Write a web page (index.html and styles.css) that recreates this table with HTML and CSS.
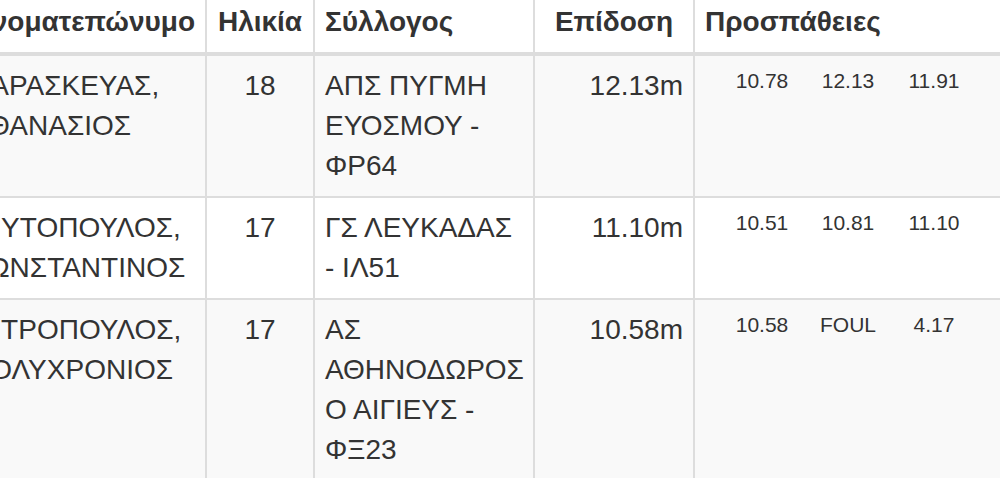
FILE: index.html
```html
<!DOCTYPE html>
<html lang="el">
<head>
<meta charset="utf-8">
<title>Αποτελέσματα</title>
<link rel="stylesheet" href="styles.css">
</head>
<body>
<table class="results">
  <colgroup>
    <col class="w-name">
    <col class="w-age">
    <col class="w-club">
    <col class="w-mark">
    <col class="w-att">
  </colgroup>
  <thead>
    <tr>
      <th class="t-left">Ονοματεπώνυμο</th>
      <th class="t-center">Ηλικία</th>
      <th class="t-left">Σύλλογος</th>
      <th class="t-center">Επίδοση</th>
      <th class="t-left">Προσπάθειες</th>
    </tr>
  </thead>
  <tbody>
    <tr>
      <td>ΠΑΡΑΣΚΕΥΑΣ, ΑΘΑΝΑΣΙΟΣ</td>
      <td class="t-center">18</td>
      <td>ΑΠΣ ΠΥΓΜΗ ΕΥΟΣΜΟΥ - ΦΡ64</td>
      <td class="t-right">12.13m</td>
      <td><div class="attempts"><span>10.78</span><span>12.13</span><span>11.91</span></div></td>
    </tr>
    <tr>
      <td>ΜΙΥΤΟΠΟΥΛΟΣ, ΚΩΝΣΤΑΝΤΙΝΟΣ</td>
      <td class="t-center">17</td>
      <td>ΓΣ ΛΕΥΚΑΔΑΣ - ΙΛ51</td>
      <td class="t-right">11.10m</td>
      <td><div class="attempts"><span>10.51</span><span>10.81</span><span>11.10</span></div></td>
    </tr>
    <tr>
      <td>ΜΙΤΡΟΠΟΥΛΟΣ, ΠΟΛΥΧΡΟΝΙΟΣ</td>
      <td class="t-center">17</td>
      <td>ΑΣ ΑΘΗΝΟΔΩΡΟΣ Ο ΑΙΓΙΕΥΣ - ΦΞ23</td>
      <td class="t-right">10.58m</td>
      <td><div class="attempts"><span>10.58</span><span>FOUL</span><span>4.17</span></div></td>
    </tr>
  </tbody>
</table>
</body>
</html>
```

FILE: styles.css
```css
html, body {
  margin: 0;
  padding: 0;
  overflow: hidden;
  background: #ffffff;
}

body {
  font-family: "Liberation Sans", Arial, "Helvetica Neue", sans-serif;
  font-size: 28px;
  line-height: 40px;
  color: #333333;
}

.results {
  border-collapse: separate;
  border-spacing: 0;
  table-layout: fixed;
  width: 1135px;
  margin: -10px 0 0 -42px;
}

.w-name { width: 247px; }
.w-age { width: 108px; }
.w-club { width: 220px; }
.w-mark { width: 160px; }
.w-att { width: 400px; }

.results th,
.results td {
  box-sizing: border-box;
  padding: 10px;
  border-left: 2px solid #dddddd;
  border-top: 2px solid #dddddd;
  vertical-align: top;
}

.results th {
  font-weight: bold;
  vertical-align: bottom;
  border-bottom: 4px solid #dddddd;
  background: #ffffff;
}

.results tbody tr:first-child td {
  border-top: 0;
}

.results tbody tr:nth-child(odd) td {
  background: #f9f9f9;
}

.results tbody tr:nth-child(even) td {
  background: #ffffff;
}

.t-left { text-align: left; }
.t-center { text-align: center; }
.t-right { text-align: right; }

.attempts {
  display: flex;
  padding-left: 14px;
  font-size: 21px;
  line-height: 30px;
}

.attempts span {
  width: 86px;
  flex: none;
  text-align: center;
}
```
